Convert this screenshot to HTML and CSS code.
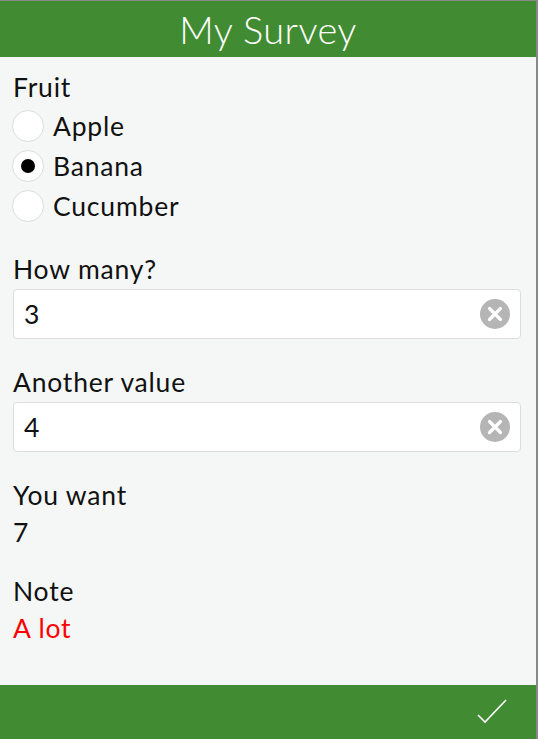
FILE: index.html
```html
<!DOCTYPE html>
<html lang="en">

<head>
    <meta charset="UTF-8">
    <meta name="viewport" content="width=device-width, initial-scale=1.0">
    <title>My Survey</title>
    <link rel="stylesheet" href="styles.css">
</head>

<body>
    <div class="app">
        <header class="top-bar">My Survey</header>

        <main class="form">
            <div class="field first">
                <div class="label">Fruit</div>
                <div class="choices">
                    <label class="choice"><span class="radio"></span>Apple</label>
                    <label class="choice"><span class="radio checked"></span>Banana</label>
                    <label class="choice"><span class="radio"></span>Cucumber</label>
                </div>
            </div>

            <div class="field">
                <div class="label">How many?</div>
                <div class="input-box">
                    <span class="value">3</span>
                    <span class="clear">
                        <svg width="30" height="30" viewBox="0 0 30 30">
                            <circle cx="15" cy="15" r="15" fill="#b5b5b5"/>
                            <path d="M9.5 9.5 L20.5 20.5 M20.5 9.5 L9.5 20.5" stroke="#fff" stroke-width="3.2" stroke-linecap="round"/>
                        </svg>
                    </span>
                </div>
            </div>

            <div class="field">
                <div class="label">Another value</div>
                <div class="input-box">
                    <span class="value">4</span>
                    <span class="clear">
                        <svg width="30" height="30" viewBox="0 0 30 30">
                            <circle cx="15" cy="15" r="15" fill="#b5b5b5"/>
                            <path d="M9.5 9.5 L20.5 20.5 M20.5 9.5 L9.5 20.5" stroke="#fff" stroke-width="3.2" stroke-linecap="round"/>
                        </svg>
                    </span>
                </div>
            </div>

            <div class="field">
                <div class="label">You want</div>
                <div class="text">7</div>
            </div>

            <div class="field">
                <div class="label">Note</div>
                <div class="text note">A lot</div>
            </div>
        </main>

        <footer class="bottom-bar">
            <svg class="submit" width="32" height="28" viewBox="0 0 32 28">
                <path d="M2 17 L9 24 L30 2" fill="none" stroke="#fff" stroke-width="1.6"/>
            </svg>
        </footer>
    </div>
</body>

</html>
```

FILE: styles.css
```css
body {
    margin: 0;
    font-family: Lato, "Open Sans", sans-serif;
    background-color: #888;
}

.app {
    height: 738px;
    margin-top: 1px;
    margin-right: 2px;
    display: flex;
    flex-direction: column;
    background-color: #f5f7f6;
    color: #111;
}

.top-bar {
    height: 56px;
    background-color: #418c32;
    color: #fff;
    font-size: 38px;
    font-weight: 300;
    line-height: 56px;
    letter-spacing: 0.4px;
    text-align: center;
}

.form {
    flex: 1;
    padding: 0 15px 0 13px;
}

.field {
    margin-top: 27px;
}

.field.first {
    margin-top: 14px;
}

.label,
.text,
.choice,
.value {
    font-size: 26.5px;
    line-height: 32px;
    letter-spacing: 0.8px;
}

.choices {
    margin-top: 3px;
}

.choice {
    display: flex;
    align-items: center;
    height: 40px;
    gap: 9px;
    margin-left: -1px;
}

.radio {
    width: 30px;
    height: 30px;
    border: 1px solid #ddd;
    border-radius: 50%;
    background-color: #fff;
    display: flex;
    align-items: center;
    justify-content: center;
}

.radio.checked::after {
    content: "";
    width: 14px;
    height: 14px;
    border-radius: 50%;
    background-color: #000;
}

.input-box {
    margin-top: 4px;
    height: 48px;
    border: 1px solid #ddd;
    border-radius: 4px;
    background-color: #fff;
    display: flex;
    align-items: center;
    justify-content: space-between;
    padding: 0 10px 0 10px;
}

.clear {
    display: flex;
}

.text {
    margin-top: 5px;
}

.note {
    color: #ff0000;
}

.bottom-bar {
    height: 54px;
    background-color: #418c32;
    display: flex;
    align-items: center;
    justify-content: flex-end;
    padding-right: 28px;
}
```
